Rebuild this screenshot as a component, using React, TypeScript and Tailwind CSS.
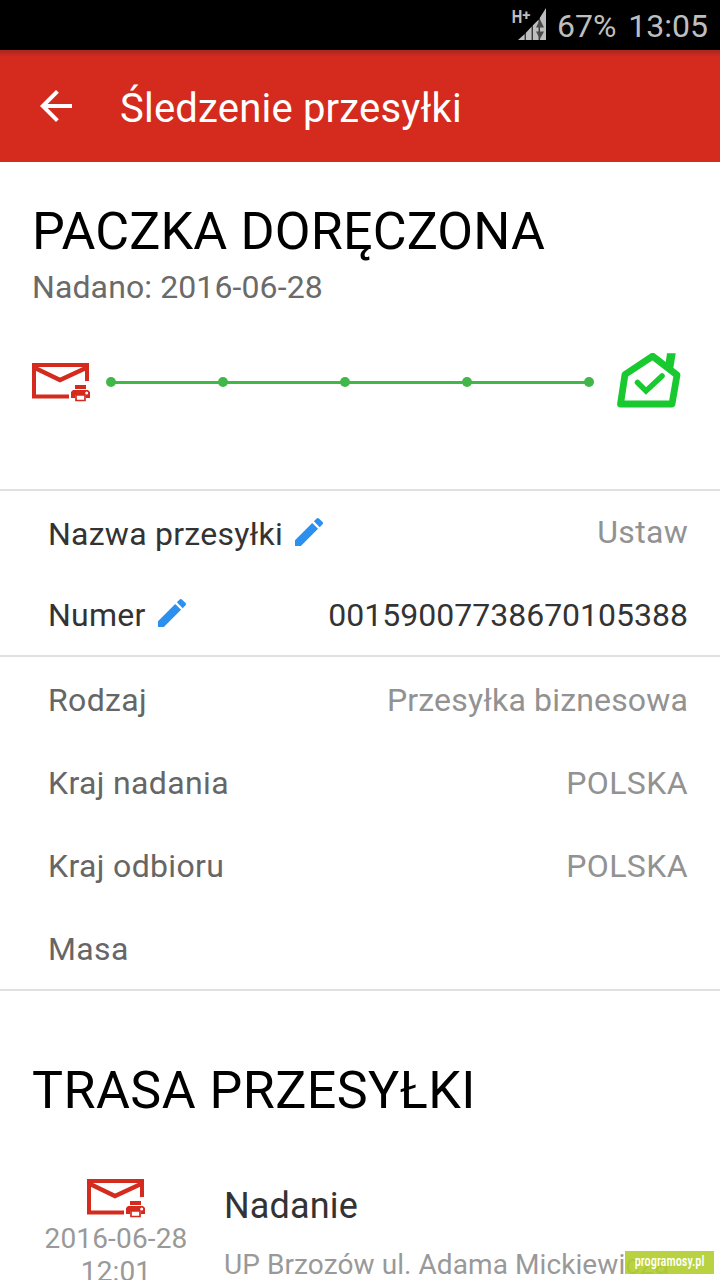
import { clsx } from 'clsx';

const steps = [0, 1, 2, 3, 4];

const details = [
    { label: 'Rodzaj', value: 'Przesyłka biznesowa', spacing: 'tracking-[0.16px]' },
    { label: 'Kraj nadania', value: 'POLSKA', spacing: 'tracking-[0.4px]' },
    { label: 'Kraj odbioru', value: 'POLSKA', spacing: 'tracking-[0.4px]' },
    { label: 'Masa', value: '', spacing: '' },
];

function SignalIcon() {
    return (
        <svg width="34" height="34" viewBox="0 0 34 34" className="mr-[11px] overflow-visible" fontFamily="Roboto" fontWeight="700">
            <text x="-0.3" y="15.300" fontSize="17.500" fill="#bebebe" textLength="10.500" lengthAdjust="spacingAndGlyphs">H</text>
            <text x="10.300" y="12" fontSize="15" fill="#bebebe">+</text>
            <path d="M6 32L12.700 26V32zM13.700 25L19.700 18.500V32h-6zM20.700 17.500L26.700 11.500V32h-6zM27.700 10L34 0V32h-6.300z" fill="#bebebe" />
            <path d="M24 19.500L28 11.500L32 19.500zM24 23.500L28 31L32 23.500z" fill="#4b4b4b" />
        </svg>
    );
}

function MailPrintIcon() {
    return (
        <svg width="58" height="40" viewBox="0 0 58 40" fill="none" className="shrink-0">
            <path d="M37 33.500H2V2h53v17" stroke="#d52b1e" strokeWidth="4" />
            <path d="M2 4.500L28 17L55 4.500" stroke="#d52b1e" strokeWidth="4.300" />
            <path d="M52.500 18L57 22V18z" fill="#fff" />
            <path d="M43 22h11v4H43zM41 27h15l2 2v6h-4v-3H43v3h-4v-6z" fill="#d52b1e" />
            <path d="M44 32h9v5.500h-9z" fill="#fff" stroke="#d52b1e" strokeWidth="1.700" />
            <circle cx="54.700" cy="30" r="1.500" fill="#fff" />
        </svg>
    );
}

function HouseIcon() {
    return (
        <svg width="64" height="56" viewBox="0 0 64 56" fill="none" className="shrink-0">
            <path d="M50 0.300h8.700L56 17L48.500 11z" fill="#18c92f" />
            <path d="M8 21.500L35.700 3.200L60 22L55 51H3.500z" stroke="#18c92f" strokeWidth="6.800" strokeLinejoin="round" />
            <path d="M20.500 29.500L29 38L45 23" stroke="#18c92f" strokeWidth="5.500" strokeLinecap="round" strokeLinejoin="miter" />
        </svg>
    );
}

function PencilIcon() {
    return (
        <svg width="28" height="28" viewBox="3 3 18 18" fill="#2b90f0" className="ml-3">
            <path d="M3 17.250V21h3.750L17.810 9.940l-3.750-3.750L3 17.250zM20.710 7.040c.39-.39.39-1.020 0-1.410l-2.340-2.340c-.39-.39-1.020-.39-1.410 0l-1.830 1.830 3.750 3.750 1.830-1.830z" />
        </svg>
    );
}

function EditableRow({ label, value, muted }: { label: string; value: string; muted?: boolean }) {
    return (
        <div className="flex h-[81px] items-center justify-between">
            <div className="flex items-center tracking-[0.25px] text-[#333]">
                {label}
                <div className="pb-[3px]">
                    <PencilIcon />
                </div>
            </div>
            <span className={clsx(muted ? 'pb-[3px] tracking-[0.3px] text-[#929292]' : 'text-[#333]')}>{value}</span>
        </div>
    );
}

export default function App() {
    return (
        <div className="relative h-[1280px] w-[720px] overflow-hidden bg-white font-['Roboto',sans-serif] text-[32px] leading-[38px]">
            {/* Status bar */}
            <div className="flex h-[50px] items-center justify-end bg-black pr-3 text-[#bebebe]">
                <SignalIcon />
                <span className="mr-[12px] pt-px">67%</span>
                <span className="pt-px">13:05</span>
            </div>

            {/* App bar */}
            <header className="flex h-28 items-center bg-[#d52b1e] bg-linear-to-b from-[#a82620] to-[#d52b1e] to-[6%] pl-10 text-white">
                <svg width="32" height="32" viewBox="4 4 16 16" fill="currentColor">
                    <path d="M20 11H7.830l5.590-5.590L12 4l-8 8 8 8 1.410-1.410L7.830 13H20v-2z" />
                </svg>
                <h1 className="ml-12 pt-[5px] text-[40px] tracking-[0.2px]">Śledzenie przesyłki</h1>
            </header>

            {/* Delivery status */}
            <section className="h-[327px] px-8 pt-[39px]">
                <h2 className="text-[52px] leading-[62px] tracking-[0.16px] text-black">PACZKA DORĘCZONA</h2>
                <p className="mt-[5px] tracking-[0.11px] text-[#6a6a6a]">Nadano: 2016-06-28</p>
                <div className="mt-[47px] flex items-center">
                    <div className="pt-1">
                        <MailPrintIcon />
                    </div>
                    <div className="relative ml-4 flex w-[488px] items-center gap-[112px] pt-[2px]">
                        <div className="absolute inset-x-1 h-[3px] bg-[#41b649]" />
                        {steps.map((step) => (
                            <span key={step} className={clsx('size-[10px] shrink-0 rounded-full bg-[#41b649]', step === 1 && '-ml-[10px]')} />
                        ))}
                    </div>
                    <div className="ml-[23px]">
                        <HouseIcon />
                    </div>
                </div>
            </section>

            {/* Editable fields */}
            <section className="h-[166px] border-t-2 border-[#e0e0e0] pt-[2px] pr-8 pl-12">
                <EditableRow label="Nazwa przesyłki" value="Ustaw" muted />
                <EditableRow label="Numer" value="00159007738670105388" />
            </section>

            {/* Parcel details */}
            <section className="h-[336px] border-y-2 border-[#e0e0e0] pt-px pr-8 pl-12">
                {details.map((detail) => (
                    <div key={detail.label} className="flex h-[83px] items-center justify-between">
                        <span className="tracking-[0.35px] text-[#666]">{detail.label}</span>
                        <span className={clsx('text-[#929292]', detail.spacing)}>{detail.value}</span>
                    </div>
                ))}
            </section>

            {/* Route */}
            <section className="px-8 pt-[69px]">
                <h2 className="text-[52px] leading-[62px] tracking-[0.45px] text-black">TRASA PRZESYŁKI</h2>
                <div className="mt-[57px] flex">
                    <div className="flex w-[168px] flex-col items-center text-center text-[28px] leading-[33px] tracking-[0.15px] text-[#999]">
                        <MailPrintIcon />
                        <p className="mt-[3px]">
                            2016-06-28
                            <br />
                            12:01
                        </p>
                    </div>
                    <div className="ml-6 pt-[6px]">
                        <h3 className="text-[36px] leading-[42px] tracking-[0.15px] text-[#333]">Nadanie</h3>
                        <p className="mt-[21px] text-[28px] leading-[33px] tracking-[0.08px] whitespace-nowrap text-[#999]">UP Brzozów ul. Adama Mickiewicza</p>
                    </div>
                </div>
            </section>

            <div className="absolute right-[6px] bottom-[6px] flex h-[23px] w-[89px] items-center justify-center bg-[#b1cd2c]/90 pb-[3px] font-['Roboto_Condensed','Roboto',sans-serif] text-[14px] font-medium text-white">
                <span className="inline-block scale-x-[0.88]">programosy.pl</span>
            </div>
        </div>
    );
}
